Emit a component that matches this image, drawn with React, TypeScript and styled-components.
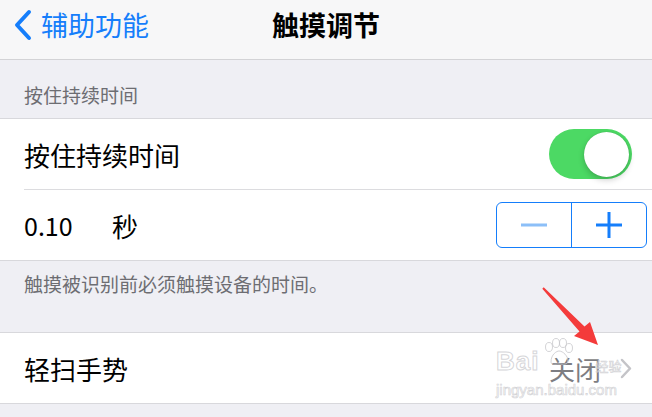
import React from 'react';
import styled, { createGlobalStyle } from 'styled-components';

const GlobalStyle = createGlobalStyle`
  html, body {
    margin: 0;
    padding: 0;
    background: #efeff4;
  }
  body {
    font-family: 'Noto Sans CJK SC', 'Noto Sans', sans-serif;
    -webkit-font-smoothing: antialiased;
  }
`;

const Screen = styled.div`
  position: relative;
  width: 652px;
  height: 417px;
  overflow: hidden;
  background: #efeff4;
  display: flex;
  flex-direction: column;
`;

const NavBar = styled.header`
  height: 59px;
  flex-shrink: 0;
  display: grid;
  grid-template-columns: 1fr auto 1fr;
  align-items: center;
  background: #f7f7f8;
  border-bottom: 1px solid #d3d3d6;
`;

const BackButton = styled.div`
  display: flex;
  align-items: center;
  gap: 8px;
  padding-left: 13px;
  color: #157efb;
  font-size: 27px;
  line-height: 1;
  margin-top: -10px;
`;

const Title = styled.div`
  font-size: 27px;
  font-weight: 600;
  color: #000;
  line-height: 1;
  margin-top: -10px;
`;

const SectionHeader = styled.div`
  height: 58px;
  flex-shrink: 0;
  display: flex;
  align-items: flex-end;
  padding: 0 0 10px 24px;
  box-sizing: border-box;
  font-size: 19px;
  color: #6d6d72;
`;

const Group = styled.section`
  flex-shrink: 0;
  background: #fff;
  border-top: 1px solid #d8d8dc;
  border-bottom: 1px solid #d8d8dc;
`;

const Row = styled.div<{ $divider?: boolean }>`
  height: 70px;
  display: flex;
  align-items: center;
  justify-content: space-between;
  padding: 0 20px 0 24px;
  font-size: 26px;
  color: #000;
  ${(p) =>
    p.$divider
      ? 'height: 71px; padding-top: 1px; box-sizing: border-box; box-shadow: inset 24px 0 0 #fff, inset 0 1px 0 #dcdcdf;'
      : ''}
`;

const Value = styled.div`
  display: flex;
  align-items: center;
`;

const Number = styled.span`
  width: 88px;
  font-size: 25px;
`;

const Toggle = styled.div`
  width: 83px;
  height: 50px;
  border-radius: 25px;
  background: #4cd964;
  display: flex;
  align-items: center;
  justify-content: flex-end;
  padding: 0 3px;
  box-sizing: border-box;
`;

const Knob = styled.div`
  width: 45px;
  height: 45px;
  border-radius: 50%;
  background: #fff;
  box-shadow: 0 3px 6px rgba(0, 0, 0, 0.2), 0 0 1px rgba(0, 0, 0, 0.2);
`;

const Stepper = styled.div`
  display: flex;
  width: 151px;
  height: 46px;
  border: 1.5px solid #157efb;
  border-radius: 6px;
  box-sizing: border-box;
  margin-right: -15px;
  overflow: hidden;
`;

const StepButton = styled.div<{ $dim?: boolean }>`
  flex: 1;
  display: flex;
  align-items: center;
  justify-content: center;
  color: ${(p) => (p.$dim ? '#8cbff8' : '#157efb')};
  & + & {
    border-left: 1.5px solid #157efb;
  }
`;

const Footer = styled.div`
  height: 71px;
  flex-shrink: 0;
  padding: 9px 0 0 24px;
  box-sizing: border-box;
  font-size: 19px;
  color: #6d6d72;
`;

const Detail = styled.div`
  display: flex;
  align-items: center;
  gap: 19px;
  color: #7d7d82;
  font-size: 26px;
`;

// faint baidu watermark lying over the last row
const Watermark = styled.div`
  position: absolute;
  left: 496px;
  top: 338px;
  display: flex;
  flex-direction: column;
  font-family: 'Liberation Sans', sans-serif;
  color: rgba(255, 255, 255, 0.4);
  -webkit-text-stroke: 1px rgba(200, 200, 204, 0.75);
  pointer-events: none;
`;

const WatermarkBrand = styled.div`
  display: flex;
  align-items: flex-end;
  line-height: 1;
`;

const BrandText = styled.span`
  font-size: 26px;
  font-weight: 700;
  letter-spacing: 1px;
`;

const BrandSmall = styled.span`
  font-family: 'Noto Sans CJK SC', sans-serif;
  font-size: 13px;
  margin-left: 20px;
  margin-bottom: 2px;
  -webkit-text-stroke: 0.6px rgba(200, 200, 204, 0.8);
`;

const WatermarkUrl = styled.div`
  font-size: 15px;
  line-height: 1;
  margin-top: 8px;
  -webkit-text-stroke: 0.7px rgba(200, 200, 204, 0.8);
`;

const ArrowLayer = styled.svg`
  position: absolute;
  left: 0;
  top: 0;
  pointer-events: none;
`;

const App = () => {
  return (
    <>
      <GlobalStyle />
      <Screen>
        <NavBar>
          <BackButton>
            <svg width="20" height="32" viewBox="0 0 20 32">
              <path d="M16 3 L4 16 L16 29" fill="none" stroke="#157efb" strokeWidth="4" strokeLinecap="round" strokeLinejoin="round" />
            </svg>
            辅助功能
          </BackButton>
          <Title>触摸调节</Title>
          <div />
        </NavBar>

        <SectionHeader>按住持续时间</SectionHeader>
        <Group>
          <Row>
            按住持续时间
            <Toggle>
              <Knob />
            </Toggle>
          </Row>
          <Row $divider>
            <Value>
              <Number>0.10</Number>
              秒
            </Value>
            <Stepper>
              <StepButton $dim>
                <svg width="26" height="4" viewBox="0 0 26 4">
                  <rect x="0" y="0.5" width="26" height="3" fill="currentColor" />
                </svg>
              </StepButton>
              <StepButton>
                <svg width="26" height="26" viewBox="0 0 26 26">
                  <rect x="0" y="11.5" width="26" height="3" fill="currentColor" />
                  <rect x="11.5" y="0" width="3" height="26" fill="currentColor" />
                </svg>
              </StepButton>
            </Stepper>
          </Row>
        </Group>

        <Footer>触摸被识别前必须触摸设备的时间。</Footer>

        <Group>
          <Row>
            轻扫手势
            <Detail>
              关闭
              <svg width="12" height="21" viewBox="0 0 12 21">
                <path d="M2 2 L10 10.5 L2 19" fill="none" stroke="#c4c4c8" strokeWidth="2.5" strokeLinecap="round" strokeLinejoin="round" />
              </svg>
            </Detail>
          </Row>
        </Group>

        <Watermark>
          <WatermarkBrand>
            <BrandText>Bai</BrandText>
            <svg width="34" height="28" viewBox="0 0 34 28" style={{ marginLeft: 2, marginBottom: 8 }}>
              <g fill="none" stroke="rgba(200,200,204,0.8)" strokeWidth="1">
                <ellipse cx="8" cy="9" rx="3.5" ry="4.5" />
                <ellipse cx="15" cy="5" rx="3.5" ry="4.5" />
                <ellipse cx="22" cy="5" rx="3.5" ry="4.5" />
                <ellipse cx="28" cy="10" rx="3.5" ry="4.5" />
                <path d="M10 24 C10 16 16 13 18 13 C22 13 27 18 27 23 C27 27 22 26 18 26 C14 26 10 27 10 24 Z" />
              </g>
            </svg>
            <BrandSmall>经验</BrandSmall>
          </WatermarkBrand>
          <WatermarkUrl>jingyan.baidu.com</WatermarkUrl>
        </Watermark>

        <ArrowLayer width="652" height="417" viewBox="0 0 652 417">
          <polygon
            points="542.3,288.7 579.5,331.5 574,336 598,345 590,322 584.5,326.5 543.7,287.3"
            fill="#f43b3b"
          />
        </ArrowLayer>
      </Screen>
    </>
  );
};

export default App;
